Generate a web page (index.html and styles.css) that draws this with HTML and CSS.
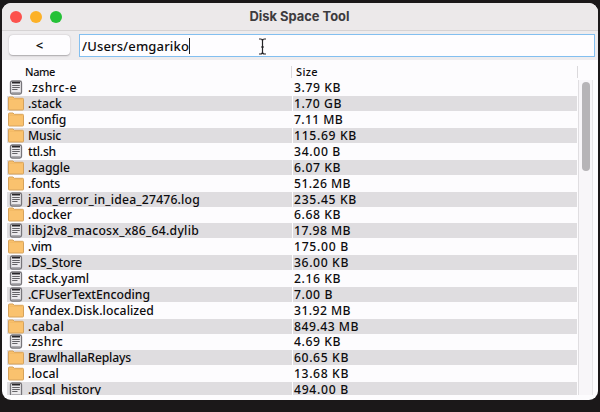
FILE: index.html
```html
<!DOCTYPE html>
<html lang="en">
<head>
<meta charset="utf-8">
<title>Disk Space Tool</title>
<link rel="stylesheet" href="styles.css">
</head>
<body>
<svg class="symbols" aria-hidden="true">
  <symbol id="folder" viewBox="0 0 16 15">
    <path d="M.5 13.2V2Q.5 1 1.500 1H5l1.300 1.300H14.500q1 0 1 1v9.900q0 .8-.8.8H1.300Q.5 14 .5 13.200Z" fill="#fac26e" stroke="#d6a25b"/>
    <path d="M1.500 3.200H14.500" stroke="#efb45e" stroke-width=".7"/>
  </symbol>
  <symbol id="file" viewBox="0 0 16 15">
    <rect x="2.500" y="1" width="11" height="13" rx="1.800" fill="#eceaed" stroke="#77757a" stroke-width="1.300"/>
    <path d="M4 2.700H12" stroke="#28262a" stroke-width="1.700"/>
    <path d="M4.200 5.500H11.800M4.200 7.500H11.800M4.200 9.500H9.500" stroke="#555358" stroke-width=".9"/>
    <path d="M3.500 12.800H12.500" stroke="#99979c" stroke-width="1.200"/>
  </symbol>
</svg>
<main class="window">
  <header class="titlebar">
    <div class="lights"><i class="close"></i><i class="minimize"></i><i class="expand"></i></div>
    <h1>Disk Space Tool</h1>
  </header>
  <div class="toolbar">
    <button class="back">&lt;</button>
    <div class="path"><span data-width="106">/Users/emgariko</span><i class="caret"></i>
      <svg class="pointer" viewBox="0 0 9 17"><path d="M1 1H2.500Q4.500 1 4.500 3V14Q4.500 16 2.500 16H1M8 1H6.500Q4.500 1 4.500 3M4.500 14Q4.500 16 6.500 16H8M3 9H6" fill="none" stroke="#242326" stroke-width="1.200"/></svg>
    </div>
  </div>
  <section class="content">
    <div class="headings"><span class="name-heading"><b data-width="29">Name</b></span><span class="size-heading"><b data-width="21">Size</b></span></div>
    <div class="viewport">
      <div class="rows" id="rows"></div>
      <div class="scrollbar"><i></i></div>
    </div>
  </section>
</main>
<script src="rows.js"></script>
</body>
</html>
```
FILE: styles.css
```css
* { box-sizing: border-box; }
body { margin: 0; width: 600px; height: 412px; overflow: hidden; padding: 3px 2px 0; background: #1b1819; color: #0d0c0e; font: 500 12.2px/16px "Noto Sans", "Open Sans", sans-serif; }
.symbols { display: none; }
.window { width: 596px; height: 397px; border-radius: 9px; overflow: hidden; background: #fdfcfe; display: flex; flex-direction: column; }
.titlebar { height: 28px; flex: none; display: grid; grid-template-columns: 1fr auto 1fr; align-items: center; background: #ece9ea; border-bottom: 1px solid #d6d3d4; }
.lights { display: flex; gap: 8px; padding-left: 8px; }
.lights i { width: 12px; height: 12px; border-radius: 50%; }
.close { background: #fc524d; }
.minimize { background: #fcb128; }
.expand { background: #25c137; }
h1 { margin: 0 1px 0 0; font: 700 12.9px/27px Inter, sans-serif; color: #3d3b3e; }
.toolbar { height: 29px; flex: none; display: flex; align-items: flex-start; padding: 3px 3px 0 7px; gap: 9px; background: #eeecee; }
.back { width: 61px; height: 20px; margin-top: 1px; padding: 0; border: 0; border-radius: 4px; background: #fefdff; box-shadow: 0 .5px 1.500px #aaa7aa; font: 600 13px/18px "Noto Sans", sans-serif; color: #111; }
.path { position: relative; flex: 1; height: 23px; display: flex; align-items: center; border: 1px solid #83bff0; background: #fefdff; padding-left: 2px; font-size: 13px; }
.path span { white-space: nowrap; }
.caret { width: 1px; height: 16px; background: #222; }
.pointer { position: absolute; left: 178px; top: 3px; width: 9px; height: 17px; }
.content { flex: 1; min-height: 0; }
.headings { height: 20px; display: grid; grid-template-columns: 290px 286px; font-size: 11px; line-height: 12px; padding-top: 6px; }
.headings b { font-weight: 500; white-space: nowrap; }
.name-heading { padding-left: 23px; border-right: 1px solid #dbd9dc; height: 12px; }
.size-heading { padding-left: 4px; border-right: 1px solid #dbd9dc; height: 12px; }
.viewport { height: 315px; overflow: hidden; display: flex; padding-left: 5px; }
.rows { width: 570px; padding-top: .4px; }
.row { height: 15.88px; display: grid; grid-template-columns: 285px 284px; column-gap: 1px; line-height: 16px; }
.cell { white-space: nowrap; display: flex; height: 15px; }
.row:nth-child(even) .cell { background: #dfdde0; }
.cell svg { width: 16px; height: 15px; flex: none; margin: 0 4px 0 1px; }
.size { padding-left: 1px; }
.scrollbar { width: 15px; margin-left: 1px; border-left: 1px solid #e0dee1; border-right: 1px solid #e7e5e8; background: #f8f6f9; padding: 2px 0 0 3px; }
.scrollbar i { display: block; width: 8px; height: 89px; background: #b6b4b7; border-radius: 4px; }
```
FILE: rows.js
```js
const entries = [
  ["file", ".zshrc-e", 48, "3.79 KB", 46],
  ["folder", ".stack", 33, "1.70 GB", 47],
  ["folder", ".config", 37, "7.11 MB", 48],
  ["folder", "Music", 32, "115.69 KB", 62],
  ["file", "ttl.sh", 27, "34.00 B", 46],
  ["folder", ".kaggle", 41, "6.07 KB", 46],
  ["folder", ".fonts", 31, "51.26 MB", 56],
  ["file", "java_error_in_idea_27476.log", 171, "235.45 KB", 62],
  ["folder", ".docker", 43, "6.68 KB", 46],
  ["file", "libj2v8_macosx_x86_64.dylib", 170, "17.98 MB", 56],
  ["folder", ".vim", 23, "175.00 B", 54],
  ["file", ".DS_Store", 53, "36.00 KB", 54],
  ["file", "stack.yaml", 60, "2.16 KB", 46],
  ["file", ".CFUserTextEncoding", 121, "7.00 B", 38],
  ["folder", "Yandex.Disk.localized", 125, "31.92 MB", 56],
  ["folder", ".cabal", 35, "849.43 MB", 64],
  ["file", ".zshrc", 34, "4.69 KB", 46],
  ["folder", "BrawlhallaReplays", 102, "60.65 KB", 54],
  ["folder", ".local", 30, "13.68 KB", 54],
  ["file", ".psql_history", 72, "494.00 B", 54]
];

document.getElementById("rows").innerHTML = entries.map(([kind, name, nameWidth, size, sizeWidth]) => `
  <div class="row">
    <div class="cell"><svg><use href="#${kind}"/></svg><span data-width="${nameWidth}">${name}</span></div>
    <div class="cell size"><span data-width="${sizeWidth}">${size}</span></div>
  </div>`).join("");

// Space each label evenly across its measured text width.
document.querySelectorAll("[data-width]").forEach(label => {
  const extra = Number(label.dataset.width) + 1 - label.getBoundingClientRect().width;
  label.style.letterSpacing = `${extra / label.textContent.length}px`;
});
```
